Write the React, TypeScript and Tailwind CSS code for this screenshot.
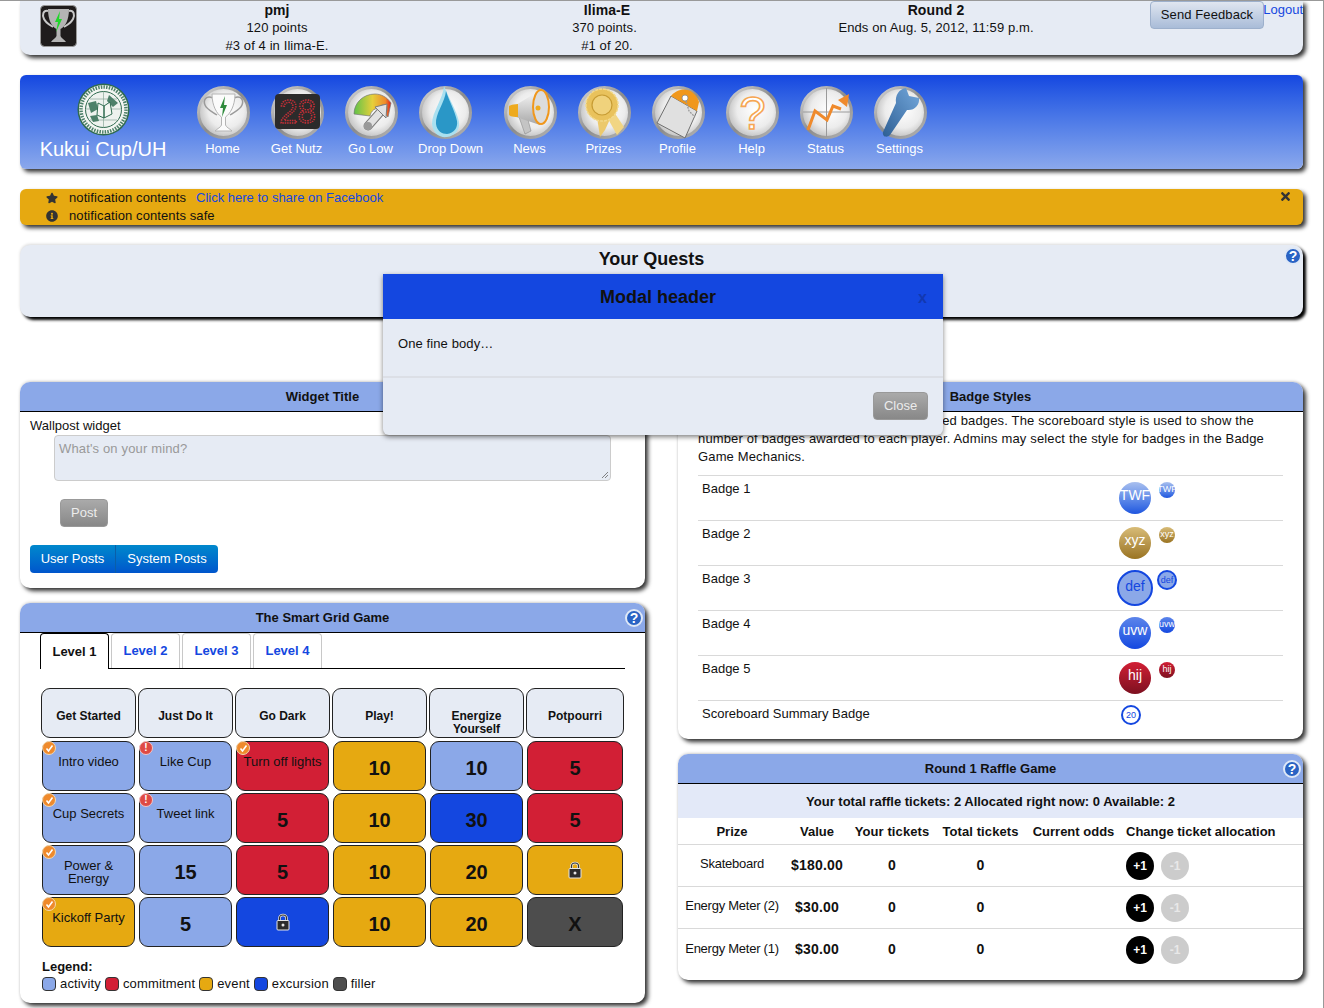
import { ReactNode } from 'react';
import { FaStar, FaInfoCircle, FaTimes } from 'react-icons/fa';

const sans = '"Liberation Sans", Arial, sans-serif';

const IconFace = ({ id, children }: { id: string; children: ReactNode }) => (
  <svg width="53" height="54" viewBox="0 0 53 54" className="block translate-x-px">
    <defs>
      <radialGradient id={`face-${id}`} cx="0.55" cy="0.45" r="0.6">
        <stop offset="0" stopColor="#ffffff" />
        <stop offset="0.6" stopColor="#ececec" />
        <stop offset="1" stopColor="#b8b8b8" />
      </radialGradient>
      <linearGradient id={`ring-${id}`} x1="0" y1="0" x2="1" y2="1">
        <stop offset="0" stopColor="#d8d8d8" />
        <stop offset="0.5" stopColor="#8c8c8c" />
        <stop offset="1" stopColor="#b4b4b4" />
      </linearGradient>
    </defs>
    <circle cx="26.5" cy="27.5" r="25" fill={`url(#face-${id})`} stroke={`url(#ring-${id})`} strokeWidth="3" />
    {children}
  </svg>
);

const navItems: { label: string; wide?: boolean; icon: ReactNode }[] = [
  {
    label: 'Home',
    icon: (
      <IconFace id="home">
        <path d="M16 13C9 10 6 15 8 20C10 25 16 27 20 30" fill="none" stroke="#9a9a9a" strokeWidth="1.5" />
        <path d="M37 13C44 10 47 15 45 20C43 25 37 27 33 30" fill="none" stroke="#9a9a9a" strokeWidth="1.5" />
        <path d="M15 9H38C38 21 33 29 28.5 32V40C29 42 33 44 35 46H18C20 44 24 42 24.5 40V32C20 29 15 21 15 9Z" fill="#fbfbfb" stroke="#b4b4b4" />
        <path d="M28 11L23 23H26L25 32L30 20H27Z" fill="#2f8a3c" />
      </IconFace>
    ),
  },
  {
    label: 'Get Nutz',
    icon: (
      <IconFace id="nutz">
        <rect x="4" y="9" width="45" height="35" rx="4" fill="#2b2b2b" />
        <text x="26.5" y="38" textAnchor="middle" fontFamily={sans} fontSize="33" fill="none" stroke="#d0303a" strokeWidth="1.4" strokeDasharray="1.3 1.1">
          28
        </text>
      </IconFace>
    ),
  },
  {
    label: 'Go Low',
    icon: (
      <IconFace id="golow">
        <defs>
          <linearGradient id="gauge" x1="0" y1="0" x2="1" y2="0">
            <stop offset="0" stopColor="#5fc24a" />
            <stop offset="0.5" stopColor="#e6cf3a" />
            <stop offset="0.85" stopColor="#ef8a2a" />
            <stop offset="1" stopColor="#e01b1b" />
          </linearGradient>
        </defs>
        <path d="M9 29C9 18 18 9 30 9C36 9 42 12 46 18L43 32L36 24C30 22 26 26 25 31Z" fill="url(#gauge)" stroke="#777" strokeWidth="0.7" />
        <path d="M23 41L38 24" stroke="#7c7c7c" strokeWidth="9" strokeLinecap="round" />
        <path d="M23 41L38 24" stroke="#e2e2e2" strokeWidth="7" strokeLinecap="round" />
        <path d="M42 19L41 33L30 22Z" fill="#e2e2e2" stroke="#7c7c7c" />
        <circle cx="23" cy="41" r="4" fill="#999" />
      </IconFace>
    ),
  },
  {
    label: 'Drop Down',
    wide: true,
    icon: (
      <IconFace id="drop">
        <path d="M25 1C24 14 13 27 13 39C14 49 21 53 28 52C36 51 41 45 40 37C38 26 30 14 25 1Z" fill="#a9e0f0" />
        <path d="M27 6C26 17 16 29 17 39C18 46 23 49 28 49C35 48 39 43 38 36C36 26 30 16 27 6Z" fill="#2a97c7" />
      </IconFace>
    ),
  },
  {
    label: 'News',
    icon: (
      <IconFace id="news">
        <defs>
          <linearGradient id="horn" x1="0" y1="0" x2="0" y2="1">
            <stop offset="0" stopColor="#fafafa" />
            <stop offset="1" stopColor="#a8a8a8" />
          </linearGradient>
        </defs>
        <path d="M15 32L23 31L27 46L21 49Z" fill="#c4c4c4" stroke="#8a8a8a" strokeWidth="0.6" />
        <path d="M12 20L36 5V40L12 32Z" fill="url(#horn)" />
        <path d="M5 22C5 20 7 20 14 19V32C7 32 5 31 5 29Z" fill="#eeaa1e" />
        <ellipse cx="37" cy="22" rx="8" ry="17" fill="#dcdcdc" stroke="#f0971c" strokeWidth="2" />
        <circle cx="34" cy="23" r="2.5" fill="#eeaa1e" />
      </IconFace>
    ),
  },
  {
    label: 'Prizes',
    icon: (
      <IconFace id="prizes">
        <path d="M19 32L22 52L27 45L33 32Z" fill="#ecc96c" />
        <path d="M29 32L39 50L46 42L36 27Z" fill="#f1d583" />
        <circle cx="24" cy="20" r="16" fill="#e9c25c" stroke="#f2d98c" strokeWidth="1.5" strokeDasharray="3 1" />
        <circle cx="24" cy="20" r="10" fill="#f0d27c" stroke="#c79c34" strokeWidth="1.2" />
      </IconFace>
    ),
  },
  {
    label: 'Profile',
    icon: (
      <IconFace id="profile">
        <path d="M19 11L45 26L33 53L5 38Z" fill="#e0e0e0" stroke="#6f6f6f" strokeWidth="1" />
        <path d="M19 11C26 2 42 1 47 17L45 26Z" fill="#f0971c" />
        <circle cx="33" cy="13" r="3" fill="#fff" stroke="#888" strokeWidth="0.8" />
        <path d="M34 16L37 26L43 32" fill="none" stroke="#999" strokeWidth="1.3" strokeDasharray="2 1" />
      </IconFace>
    ),
  },
  {
    label: 'Help',
    icon: (
      <IconFace id="help">
        <text x="26.5" y="44" textAnchor="middle" fontFamily={sans} fontSize="47" fill="#ffffff" stroke="#f6a653" strokeWidth="1.6">
          ?
        </text>
      </IconFace>
    ),
  },
  {
    label: 'Status',
    icon: (
      <IconFace id="status">
        <path d="M26.5 3V52M3 27H50" stroke="#9a9a9a" strokeWidth="1" />
        <path d="M8 45L15 26L27 35L33 21L41 24" fill="none" stroke="#ef8a2c" strokeWidth="3" />
        <path d="M38 15L49 9L47 22Z" fill="#ef8a2c" />
      </IconFace>
    ),
  },
  {
    label: 'Settings',
    icon: (
      <IconFace id="settings">
        <defs>
          <linearGradient id="wrench" x1="1" y1="0" x2="0" y2="1">
            <stop offset="0" stopColor="#74a8dc" />
            <stop offset="1" stopColor="#2e5f94" />
          </linearGradient>
        </defs>
        <path d="M32 3L35 11L45 13C46 20 40 26 33 25L16 50C13 53 8 52 9 47L22 18C21 10 25 4 32 3Z" fill="url(#wrench)" />
      </IconFace>
    ),
  },
];

const Seal = () => (
  <svg width="53" height="53" viewBox="0 0 53 53" className="block">
    <circle cx="26.5" cy="26.5" r="26" fill="#2f6b4f" />
    <circle cx="26.5" cy="26.5" r="24.5" fill="#f4f6f2" />
    <circle cx="26.5" cy="26.5" r="22.500" fill="none" stroke="#4d8069" strokeWidth="3.500" strokeDasharray="1.5 1.2" />
    <circle cx="26.5" cy="26.5" r="18" fill="#eef2ee" stroke="#2f6b4f" strokeWidth="1" />
    <path d="M9 26H44M26.5 9V44M13 16H40M13 37H40" stroke="#8aa898" strokeWidth="0.7" />
    <path d="M11 20L19 18L21 26L14 30ZM32 12L41 20L36 24L30 18ZM13 33L20 32L22 38L16 39Z" fill="#4d8069" />
    <path d="M21 20L27 23V35L20 32ZM27 23L33 19L35 31L27 35Z" fill="#f4f6f2" stroke="#2f6b4f" />
  </svg>
);

const TopTrophy = () => (
  <svg width="37" height="42" viewBox="0 0 37 42" className="block">
    <rect x="0.5" y="0.5" width="36" height="41" rx="4" fill="#1f1c1c" stroke="#9a9a9a" />
    <path d="M8 6C3 5 2 10 4 14C6 18 10 20 13 22" fill="none" stroke="#c8c8c8" strokeWidth="2" />
    <path d="M29 6C34 5 35 10 33 14C31 18 27 20 24 22" fill="none" stroke="#c8c8c8" strokeWidth="2" />
    <path d="M8 4H29C29 15 25 22 20.5 24V31C21 33 25 35 26 37H11C12 35 16 33 16.5 31V24C12 22 8 15 8 4Z" fill="#b4b4b4" />
    <path d="M20 6L15 17H18L16 27L22 14H19Z" fill="#22d62c" />
  </svg>
);

const HelpDot = ({ className }: { className: string }) => (
  <span
    className={`absolute flex h-[18px] w-[18px] items-center justify-center rounded-full border-2 border-[#dfe8f6] bg-[#2a63c4] text-[14px] leading-none font-bold text-white ${className}`}
  >
    ?
  </span>
);

const Panel = ({
  title,
  titleClass = '',
  className = '',
  children,
}: {
  title: string;
  titleClass?: string;
  className?: string;
  children: ReactNode;
}) => (
  <section
    className={`relative overflow-hidden rounded-[10px] bg-white shadow-[3px_3px_4px_rgba(0,0,0,0.8),0_-1px_3px_rgba(0,0,0,0.15)] ${className}`}
  >
    <h3 className={`flex h-[30px] items-center justify-center border-b border-black bg-[#8ba8e8] text-[13px] font-bold ${titleClass}`}>
      {title}
    </h3>
    {children}
  </section>
);

const badges = [
  { label: 'Badge 1', text: 'TWF', cls: 'bg-gradient-to-b from-[#a9bfee] to-[#1f55df] text-white' },
  { label: 'Badge 2', text: 'xyz', cls: 'bg-gradient-to-b from-[#d8bc77] to-[#9a7420] text-white' },
  { label: 'Badge 3', text: 'def', cls: 'border-2 border-[#1447e0] bg-[#8ba8e8] text-[#1447e0]' },
  { label: 'Badge 4', text: 'uvw', cls: 'bg-gradient-to-b from-[#5c84ea] to-[#1447e0] text-white' },
  { label: 'Badge 5', text: 'hij', cls: 'bg-gradient-to-b from-[#d21f35] to-[#7d1020] text-white' },
];

const BadgeStyles = () => (
  <Panel title="Badge Styles" className="h-[357px]">
    <div className="px-5 text-[13px] leading-[18px]">
      <p className="tracking-[0.15px]">
        Badges are used as scoreboard or awarded badges. The scoreboard style is used to show the number of badges awarded to each player. Admins may select the style for badges in the Badge Game Mechanics.
      </p>
      <div className="mt-[9px]">
        {badges.map(b => (
          <div key={b.label} className="flex h-[45px] border-t border-[#d9d9d9] pl-1">
            <span className="w-[417px] pt-1">{b.label}</span>
            {b.text === 'def' ? (
              <div className="flex -translate-x-0.5 items-start gap-1 pt-1">
                <span className={`flex h-9 w-9 items-center justify-center rounded-full pb-1 text-[14px] ${b.cls}`}>{b.text}</span>
                <span className={`flex h-5 w-5 items-center justify-center rounded-full text-[9px] ${b.cls}`}>{b.text}</span>
              </div>
            ) : (
              <div className="flex items-start gap-2 pt-[6px]">
                <span className={`flex h-8 w-8 items-center justify-center rounded-full pb-1.5 text-[14px] ${b.cls}`}>{b.text}</span>
                <span className={`flex h-4 w-4 items-center justify-center rounded-full pb-0.5 text-[9px] ${b.cls}`}>{b.text}</span>
              </div>
            )}
          </div>
        ))}
        <div className="flex h-[39px] border-t border-[#d9d9d9] pl-1">
          <span className="w-[417px] pt-1">Scoreboard Summary Badge</span>
          <span className="mt-[4px] ml-[2px] flex h-5 w-5 items-center justify-center rounded-full border-2 border-[#1447e0] text-[9px] text-[#1447e0]">20</span>
        </div>
      </div>
    </div>
  </Panel>
);

const prizes = [
  { name: 'Skateboard', value: '$180.00' },
  { name: 'Energy Meter (2)', value: '$30.00' },
  { name: 'Energy Meter (1)', value: '$30.00' },
];

const RaffleGame = () => (
  <Panel title="Round 1 Raffle Game" className="h-[226px]">
    <HelpDot className="top-[6px] right-[2px]" />
    <div className="flex h-[34px] items-center justify-center bg-[#e3e9f8] pt-px text-[13px] font-bold">
      Your total raffle tickets: 2 Allocated right now: 0 Available: 2
    </div>
    <table className="w-full table-fixed text-center text-[13px]">
      <colgroup>
        <col className="w-[108px]" />
        <col className="w-[62px]" />
        <col className="w-[88px]" />
        <col className="w-[89px]" />
        <col className="w-[101px]" />
        <col />
      </colgroup>
      <thead>
        <tr className="h-[26px] border-b border-[#d9d9d9] font-bold">
          <th className="pt-px">Prize</th>
          <th className="pt-px">Value</th>
          <th className="pt-px tracking-[0.1px]">Your tickets</th>
          <th className="pt-px tracking-[0.1px]">Total tickets</th>
          <th className="pt-px pr-1">Current odds</th>
          <th className="pt-px text-left whitespace-nowrap">Change ticket allocation</th>
        </tr>
      </thead>
      <tbody>
        {prizes.map((p, i) => (
          <tr key={p.name} className={`h-[42px] ${i < 2 ? 'border-b border-[#d9d9d9]' : ''}`}>
            <td className="pb-0.5 tracking-[-0.25px] whitespace-nowrap">{p.name}</td>
            <td className="text-[14px] font-bold tracking-[0.2px]">{p.value}</td>
            <td className="text-[14px] font-bold">0</td>
            <td className="text-[14px] font-bold">0</td>
            <td />
            <td className="pt-0.5">
              <div className="flex gap-[7px]">
                <span className="flex h-7 w-7 items-center justify-center rounded-full bg-black text-[12px] font-bold text-white">+1</span>
                <span className="flex h-7 w-7 items-center justify-center rounded-full bg-[#cccccc] text-[12px] font-bold text-[#e8e8e8]">-1</span>
              </div>
            </td>
          </tr>
        ))}
      </tbody>
    </table>
  </Panel>
);

type Cell = { kind: 'activity' | 'commitment' | 'event' | 'excursion' | 'filler'; title?: string; num?: string; lock?: boolean; mark?: 'done' | 'alert' };

const A = 'activity' as const;
const C = 'commitment' as const;
const E = 'event' as const;
const X = 'excursion' as const;

const columns: { head: string; cells: Cell[] }[] = [
  {
    head: 'Get Started',
    cells: [
      { kind: A, title: 'Intro video', mark: 'done' },
      { kind: A, title: 'Cup Secrets', mark: 'done' },
      { kind: A, title: 'Power & Energy', mark: 'done' },
      { kind: E, title: 'Kickoff Party', mark: 'done' },
    ],
  },
  {
    head: 'Just Do It',
    cells: [
      { kind: A, title: 'Like Cup', mark: 'alert' },
      { kind: A, title: 'Tweet link', mark: 'alert' },
      { kind: A, num: '15' },
      { kind: A, num: '5' },
    ],
  },
  {
    head: 'Go Dark',
    cells: [
      { kind: C, title: 'Turn off lights', mark: 'done' },
      { kind: C, num: '5' },
      { kind: C, num: '5' },
      { kind: X, lock: true },
    ],
  },
  {
    head: 'Play!',
    cells: [
      { kind: E, num: '10' },
      { kind: E, num: '10' },
      { kind: E, num: '10' },
      { kind: E, num: '10' },
    ],
  },
  {
    head: 'Energize Yourself',
    cells: [
      { kind: A, num: '10' },
      { kind: X, num: '30' },
      { kind: E, num: '20' },
      { kind: E, num: '20' },
    ],
  },
  {
    head: 'Potpourri',
    cells: [
      { kind: C, num: '5' },
      { kind: C, num: '5' },
      { kind: E, lock: true },
      { kind: 'filler', num: 'X' },
    ],
  },
];

const kindBg = {
  activity: 'bg-[#8ba8e8]',
  commitment: 'bg-[#d21f35]',
  event: 'bg-[#e6a911]',
  excursion: 'bg-[#1447e0]',
  filler: 'bg-[#4d4d4d]',
};

const LockIcon = () => (
  <svg width="14" height="18" viewBox="0 0 14 18" className="block">
    <path d="M3.5 8V5C3.5 1 10.500 1 10.500 5V8" fill="none" stroke="#e6e6e6" strokeWidth="2.6" />
    <path d="M3.5 8V5C3.5 1 10.500 1 10.500 5V8" fill="none" stroke="#333" strokeWidth="1.2" />
    <rect x="1" y="7.500" width="12" height="9.500" rx="1" fill="#2c2c2c" stroke="#e6e6e6" />
    <circle cx="7" cy="12" r="1.500" fill="#e6e6e6" />
  </svg>
);

const Mark = ({ type }: { type: 'done' | 'alert' }) =>
  type === 'done' ? (
    <span className="absolute top-0 left-0 flex h-3.5 w-3.5 items-center justify-center rounded-full border border-[#f2d8b0] bg-[#ef8a2c]">
      <svg width="9" height="9" viewBox="0 0 9 9">
        <path d="M1.500 4.500L3.500 7L7.500 1.500" fill="none" stroke="#fff" strokeWidth="1.6" />
      </svg>
    </span>
  ) : (
    <span className="absolute top-0 left-0 flex h-3.5 w-3.5 items-center justify-center rounded-full border border-[#f3c6c6] bg-[#df4a44] text-[10px] leading-none font-bold text-white">
      !
    </span>
  );

const GridCell = ({ cell }: { cell: Cell }) => (
  <div className="relative mx-px h-[50px]">
    <div className={`flex h-full flex-col items-center rounded-[9px] border border-[#222] text-center ${kindBg[cell.kind]}`}>
      {cell.title === 'Power & Energy' && <span className="px-5 pt-[13px] text-[13px] leading-[13px]">{cell.title}</span>}
      {cell.title && cell.title !== 'Power & Energy' && <span className="pt-3 text-[13px] leading-[16px]">{cell.title}</span>}
      {cell.num && <span className="pt-[14px] text-[20px] leading-[24px] font-bold">{cell.num}</span>}
      {cell.lock && (
        <span className="pt-[15px]">
          <LockIcon />
        </span>
      )}
    </div>
    {cell.mark && <Mark type={cell.mark} />}
  </div>
);

const SmartGrid = () => (
  <Panel title="The Smart Grid Game" titleClass="pr-5" className="h-[400px]">
    <HelpDot className="top-[6px] right-[2px]" />
    <div className="mx-5 flex h-[36px] gap-0.5 border-b border-black text-[13px] font-bold">
      <span className="flex h-[36px] w-[69px] items-center justify-center rounded-t border border-b-0 border-black bg-white">Level 1</span>
      {['Level 2', 'Level 3', 'Level 4'].map(l => (
        <span key={l} className="flex h-[35px] w-[69px] items-center justify-center rounded-t border border-b-0 border-[#c8c8c8] text-[#1447e0]">
          {l}
        </span>
      ))}
    </div>
    <div className="mt-[19px] ml-[21px] grid grid-cols-[95px_95px_95px_95px_95px_98px] gap-x-0.5">
      {columns.map(col => (
        <div key={col.head} className="flex flex-col gap-0.5">
          <div className="mb-[1px] flex h-[50px] items-start justify-center rounded-[9px] border border-[#222] bg-[#e6ebf4] px-2 pt-[21px] text-center text-[12px] leading-[13px] font-bold">
            {col.head}
          </div>
          {col.cells.map((c, i) => (
            <GridCell key={i} cell={c} />
          ))}
        </div>
      ))}
    </div>
    <div className="mt-[11px] ml-[22px] text-[13px] leading-[17px]">
      <div className="font-bold">Legend:</div>
      <div className="flex items-center gap-1 tracking-[0.15px]">
        {[
          ['activity', 'bg-[#8ba8e8]'],
          ['commitment', 'bg-[#d21f35]'],
          ['event', 'bg-[#e6a911]'],
          ['excursion', 'bg-[#1447e0]'],
          ['filler', 'bg-[#4d4d4d]'],
        ].map(([name, bg]) => (
          <span key={name} className="flex items-center gap-1">
            <span className={`h-[14px] w-[14px] rounded border border-[#333] ${bg}`} />
            {name}
          </span>
        ))}
      </div>
    </div>
  </Panel>
);

const WallPost = () => (
  <Panel title="Widget Title" titleClass="pr-5" className="h-[206px]">
    <div className="pt-[5px] pl-2.5 text-[13px]">
      <div className="leading-[18px]">Wallpost widget</div>
      <div className="relative ml-6 h-[46px] w-[557px] rounded border border-[#ccc] bg-[#e6ebf4] px-1 py-1 leading-[17px] tracking-[0.15px] text-[#999]">
        What's on your mind?
        <svg width="8" height="8" viewBox="0 0 8 8" className="absolute right-px bottom-px">
          <path d="M1 7L7 1M4 7L7 4" stroke="#666" strokeWidth="0.8" />
        </svg>
      </div>
      <button className="mt-[18px] ml-[30px] block h-7 w-12 rounded border border-[#999] bg-gradient-to-b from-[#aaa] to-[#888] text-[#ececec]">Post</button>
      <div className="mt-[18px] flex h-7 w-[188px] rounded bg-gradient-to-b from-[#0088cc] to-[#0055cc] text-white">
        <span className="flex w-[86px] items-center justify-center border-r border-[#0a5fa8]">User Posts</span>
        <span className="flex flex-1 items-center justify-center">System Posts</span>
      </div>
    </div>
  </Panel>
);

const Modal = () => (
  <div className="absolute top-[273px] left-[383px] z-10 h-[161px] w-[560px] overflow-hidden rounded-b-md bg-[#e6ebf4] text-[13px] shadow-[0_2px_5px_rgba(0,0,0,0.5)]">
    <div className="relative flex h-[45px] items-center justify-center bg-[#1447e0] pt-0.5 pr-[10px] text-[18px] font-bold">
      Modal header
      <span className="absolute top-3 right-4 text-[16px] text-[#1238b0]">x</span>
    </div>
    <div className="h-[59px] border-b-2 border-[#dcdfe6] px-[15px] pt-4 leading-[17px] tracking-[0.1px]">One fine body…</div>
    <div className="flex justify-end pt-[14px] pr-[15px]">
      <button className="h-7 w-[55px] rounded border border-[#999] bg-gradient-to-b from-[#aaa] to-[#888] text-[#ececec]">Close</button>
    </div>
  </div>
);

export default function App() {
  return (
    <div className="relative h-[1008px] overflow-hidden border-t border-r border-[#999] bg-white text-[#111]" style={{ fontFamily: sans }}>
      <Modal />
      <div className="ml-5 w-[1283px]">
        <header className="relative flex h-[54px] rounded-b-[10px] bg-[#e6ebf4] text-center text-[13px] leading-[18px] tracking-[0.1px] shadow-[3px_3px_4px_rgba(0,0,0,0.8)]">
          <div className="absolute top-1 left-5">
            <TopTrophy />
          </div>
          <div className="ml-[157px] w-[200px]">
            <div className="text-[14px] font-bold">pmj</div>
            <div>120 points</div>
            <div>#3 of 4 in Ilima-E.</div>
          </div>
          <div className="ml-[130px] w-[200px]">
            <div className="text-[14px] font-bold">Ilima-E</div>
            <div className="pr-[5px]">370 points.</div>
            <div>#1 of 20.</div>
          </div>
          <div className="ml-[129px] w-[200px]">
            <div className="text-[14px] font-bold">Round 2</div>
            <div className="whitespace-nowrap">Ends on Aug. 5, 2012, 11:59 p.m.</div>
          </div>
          <button className="absolute top-0 left-[1130px] h-7 w-[114px] rounded border border-[#9db0cc] bg-gradient-to-b from-[#e0e6f0] to-[#a9bcd8] text-[13px]">Send Feedback</button>
          <a className="absolute top-0 right-0 tracking-normal text-[#1447e0]">Logout</a>
        </header>

        <nav className="mt-5 flex h-[94px] rounded-[6px] bg-gradient-to-b from-[#1546e0] to-[#8ba8ec] shadow-[3px_3px_4px_rgba(0,0,0,0.8)]">
          <div className="flex w-[176px] flex-col items-center pt-2 pr-[10px]">
            <Seal />
            <span className="mt-[1px] text-[20px] leading-[24px] whitespace-nowrap text-white">Kukui Cup/UH</span>
          </div>
          <div className="flex gap-[21px] pt-2.5 text-[13px] text-white">
            {navItems.map(item => (
              <a key={item.label} className={`flex flex-col whitespace-nowrap ${item.wide ? 'w-[64px] items-start' : 'w-[53px] items-center'}`}>
                {item.icon}
                <span className="pt-[1px] leading-[17px]">{item.label}</span>
              </a>
            ))}
          </div>
        </nav>

        <div className="relative mt-5 h-9 rounded-[6px] bg-[#e6a911] pl-[26px] text-[13px] leading-[18px] tracking-[0.1px] shadow-[3px_3px_4px_rgba(0,0,0,0.8)]">
          <div className="flex items-center">
            <FaStar className="mr-[11px] h-3 w-3 text-[#333]" />
            notification contents
            <a className="ml-[10px] tracking-normal text-[#1447e0]">Click here to share on Facebook</a>
          </div>
          <div className="flex items-center">
            <FaInfoCircle className="mr-[11px] h-3 w-3 text-[#333]" />
            notification contents safe
          </div>
          <FaTimes className="absolute top-[1px] right-[11px] h-[13px] w-[13px] text-[#333]" />
        </div>

        <section className="relative mt-5 h-[72px] rounded-[10px] bg-[#e6ebf4] shadow-[3px_3px_3px_#000,0_-1px_3px_rgba(0,0,0,0.15)]">
          <h2 className="pt-[2px] pr-5 text-center text-[18px] leading-[24px] font-bold">Your Quests</h2>
          <HelpDot className="top-[2px] right-px" />
        </section>

        <div className="mt-[65px] grid grid-cols-[625px_625px] gap-x-[33px]">
          <div className="flex flex-col gap-[15px]">
            <WallPost />
            <SmartGrid />
          </div>
          <div className="flex flex-col gap-[15px]">
            <BadgeStyles />
            <RaffleGame />
          </div>
        </div>
      </div>
    </div>
  );
}
